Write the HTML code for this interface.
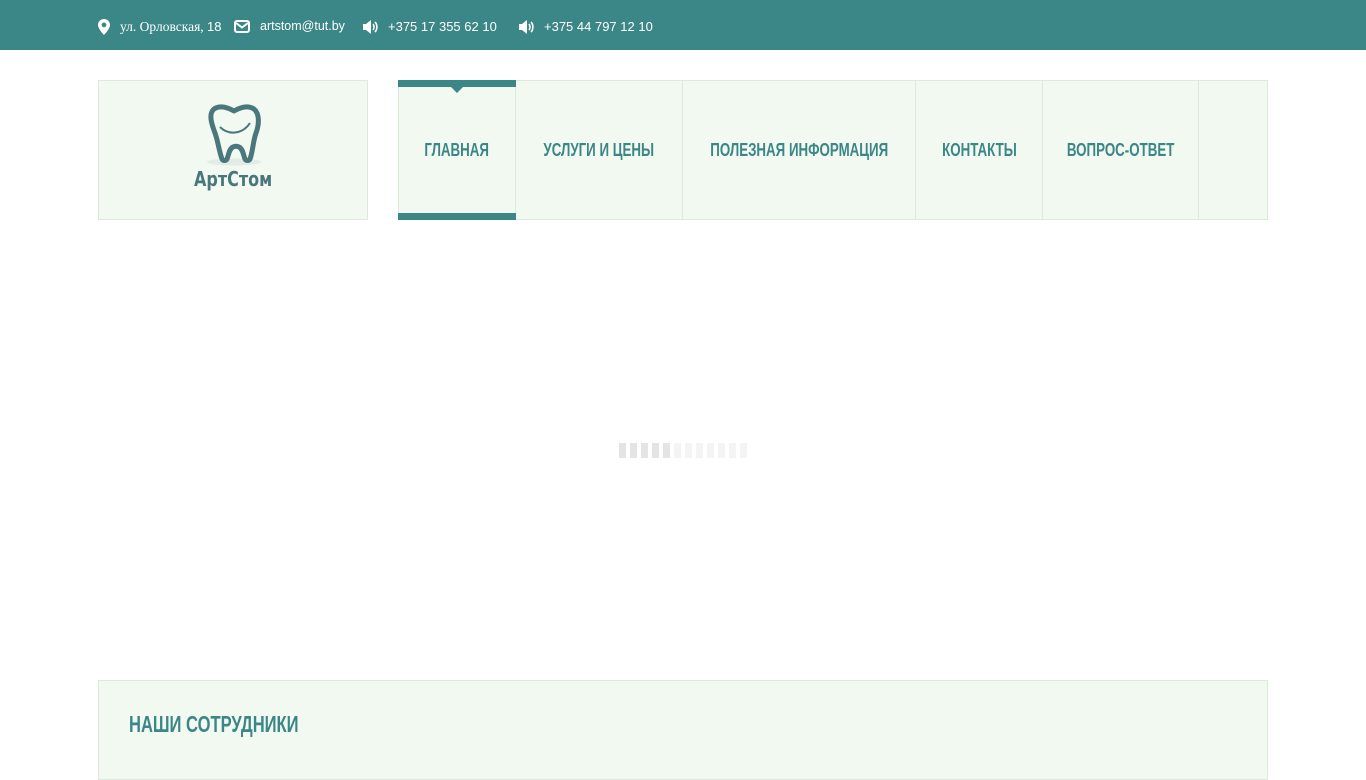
<!DOCTYPE html>
<html><head><meta charset="utf-8"><style>
*{margin:0;padding:0;box-sizing:border-box}
body{width:1366px;height:768px;overflow:hidden;background:#fff;font-family:"Liberation Sans",sans-serif}
.top{height:50px;background:#3b8686;color:#fff;font-size:13px;position:relative}
.top span{position:absolute;top:19px;white-space:nowrap}
.top svg{position:absolute}
.logo{position:absolute;left:98px;top:80px;width:270px;height:140px;background:#f2f9f1;border:1px solid #dbeadb}
.nav{position:absolute;top:80px;height:140px;background:#f2f9f1;border:1px solid #dbeadb;border-left:none;color:#3b8686;font-weight:bold;font-size:18px;display:flex;align-items:center;justify-content:center;white-space:nowrap}
.nav b{display:inline-block;transform:scaleX(0.74)}
.bars{position:absolute;top:443px;left:619px}
.bars i{position:absolute;top:0;width:7px;height:15px;background:#f4f4f4}
.emp{position:absolute;left:98px;top:680px;width:1170px;height:100px;background:#f2f9f1;border:1px solid #dbeadb}
.emp h2{position:absolute;left:30px;top:30px;color:#3b8686;font-size:23px;font-weight:bold;transform:scaleX(0.72);transform-origin:0 0;white-space:nowrap}
</style></head><body>
<div class="top">
<svg style="left:98px;top:19px" width="12" height="16" viewBox="0 0 12 16"><path d="M6 0C2.7 0 0 2.6 0 5.9 0 10 6 16 6 16s6-6 6-10.1C12 2.6 9.3 0 6 0zm0 8.3a2.4 2.4 0 110-4.8 2.4 2.4 0 010 4.8z" fill="#fff"/></svg>
<span style="left:120px;font-family:'Liberation Serif',serif;font-size:13.5px;top:19px">ул. Орловская, <span style="position:static;font-family:'Liberation Sans',sans-serif;font-size:13px">18</span></span>
<svg style="left:234px;top:20px" width="16" height="13" viewBox="0 0 16 13"><rect x="1" y="1" width="14" height="11" rx="2" fill="none" stroke="#fff" stroke-width="2"/><path d="M2 3l6 4.5L14 3" fill="none" stroke="#fff" stroke-width="2"/></svg>
<span style="left:260px;font-size:12.5px">artstom@tut.by</span>
<svg style="left:362px;top:19px" width="17" height="16" viewBox="0 0 17 16"><path d="M1 5h3l5-4v14l-5-4H1z" fill="#fff"/><path d="M11 5c1.3 1.5 1.3 4.5 0 6M13 3c2.5 2.5 2.5 7.5 0 10" fill="none" stroke="#fff" stroke-width="1.6"/></svg>
<span style="left:388px">+375 17 355 62 10</span>
<svg style="left:518px;top:19px" width="17" height="16" viewBox="0 0 17 16"><path d="M1 5h3l5-4v14l-5-4H1z" fill="#fff"/><path d="M11 5c1.3 1.5 1.3 4.5 0 6M13 3c2.5 2.5 2.5 7.5 0 10" fill="none" stroke="#fff" stroke-width="1.6"/></svg>
<span style="left:544px">+375 44 797 12 10</span>
</div>
<div class="logo">
<svg style="position:absolute;left:101px;top:22px" width="70" height="66" viewBox="0 0 70 66">
<ellipse cx="34" cy="59" rx="27" ry="3.5" fill="#e3ebe6"/>
<path d="M14 6c6-4 13-2 20 2 7-4 14-6 20-2 6 5 5 16 2 24-3 8-3 18-6 26-1 2-4 2-5 0-2-5-2-10-6-12-2-1-4-1-6 0-4 2-4 7-6 12-1 2-4 2-5 0C19 48 18 38 15 30 12 22 8 11 14 6z" fill="none" stroke="#4a777b" stroke-width="5" stroke-linejoin="round"/>
<path d="M20 24c8 8 22 8 30-4" fill="none" stroke="#4a777b" stroke-width="2"/>
</svg>
<div style="position:absolute;left:95px;top:86px;color:#4a777b;font-weight:bold;font-size:20px;font-family:'DejaVu Sans',sans-serif;transform:scaleX(0.8);transform-origin:0 0;white-space:nowrap">АртСтом</div>
</div>
<div class="nav" style="left:398px;width:118px;border-left:1px solid #dbeadb;border-top:none;border-bottom:none"><b>ГЛАВНАЯ</b>
<div style="position:absolute;left:-1px;top:0;width:118px;height:7px;background:#3b8686"></div>
<div style="position:absolute;left:52px;top:7px;border:6px solid transparent;border-top:6px solid #3b8686;border-bottom:none"></div>
<div style="position:absolute;left:-1px;bottom:0;width:118px;height:7px;background:#3b8686"></div></div>
<div class="nav" style="left:516px;width:167px"><b>УСЛУГИ И ЦЕНЫ</b></div>
<div class="nav" style="left:683px;width:233px"><b>ПОЛЕЗНАЯ ИНФОРМАЦИЯ</b></div>
<div class="nav" style="left:916px;width:127px"><b>КОНТАКТЫ</b></div>
<div class="nav" style="left:1043px;width:156px"><b>ВОПРОС-ОТВЕТ</b></div>
<div class="nav" style="left:1199px;width:69px"></div>
<div class="bars">
<i style="left:0;background:#e4e4e4"></i><i style="left:11px;background:#e4e4e4"></i><i style="left:22px;background:#e4e4e4"></i><i style="left:33px;background:#e4e4e4"></i><i style="left:44px;background:#e4e4e4"></i><i style="left:55px"></i><i style="left:66px"></i><i style="left:77px"></i><i style="left:88px"></i><i style="left:99px"></i><i style="left:110px"></i><i style="left:121px"></i>
</div>
<div class="emp"><h2>НАШИ СОТРУДНИКИ</h2></div>
</body></html>
